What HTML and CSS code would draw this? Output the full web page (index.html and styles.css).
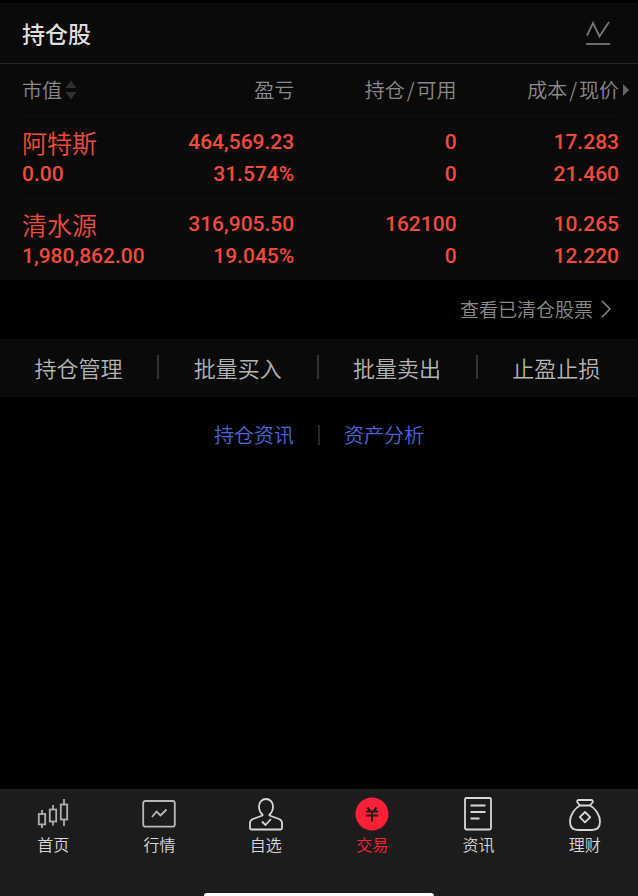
FILE: index.html
```
<!DOCTYPE html>
<html lang="zh-CN">
<head>
  <meta charset="UTF-8" />
  <title>持仓股</title>
  <meta name="viewport" content="width=device-width, initial-scale=1.0" />
  <link rel="stylesheet" href="styles.css">
</head>
<body>
  <main>
    <section class="holdings">
      <header class="holdings-header">
        <h1>持仓股</h1>
        <button class="chart-btn" type="button" aria-label="走势">
          <svg width="24" height="24" viewBox="0 0 24 24" fill="none" stroke="currentColor" stroke-width="1.8">
            <path d="M1 14.5L7 2L13.5 15.5L23 1" />
            <path d="M0 23H24" />
          </svg>
        </button>
      </header>

      <table class="stock-table">
        <thead>
          <tr>
            <th scope="col">
              <button class="sort-btn" type="button">市值
                <svg width="12" height="20" viewBox="0 0 12 20" fill="#303030">
                  <path d="M6 0.5L11.5 8H0.5Z" />
                  <path d="M0.5 12H11.5L6 19.5Z" />
                </svg>
              </button>
            </th>
            <th scope="col">盈亏</th>
            <th scope="col">持仓<span class="slash">/</span>可用</th>
            <th scope="col" class="more-col">成本<span class="slash">/</span>现价</th>
          </tr>
        </thead>
        <tbody>
          <tr>
            <td><span class="name">阿特斯</span><span>0.00</span></td>
            <td><span>464,569.23</span><span>31.574%</span></td>
            <td><span>0</span><span>0</span></td>
            <td><span>17.283</span><span>21.460</span></td>
          </tr>
          <tr>
            <td><span class="name">清水源</span><span>1,980,862.00</span></td>
            <td><span>316,905.50</span><span>19.045%</span></td>
            <td><span>162100</span><span>0</span></td>
            <td><span>10.265</span><span>12.220</span></td>
          </tr>
        </tbody>
      </table>
    </section>

    <div class="cleared-row">
      <a href="#">查看已清仓股票
        <svg width="10" height="18" viewBox="0 0 10 18" fill="none" stroke="currentColor" stroke-width="1.5">
          <path d="M1 1L9 9L1 17" />
        </svg>
      </a>
    </div>

    <div class="actions">
      <button type="button">持仓管理</button>
      <button type="button">批量买入</button>
      <button type="button">批量卖出</button>
      <button type="button">止盈止损</button>
    </div>

    <div class="links">
      <a href="#">持仓资讯</a>
      <a href="#">资产分析</a>
    </div>
  </main>

  <nav class="tab-bar">
    <div class="tabs">
      <a href="#">
        <svg width="36" height="36" viewBox="0 0 36 36" fill="none" stroke="#b0b0b0" stroke-width="1.8">
          <rect x="3.8" y="18" width="6.4" height="10.4" />
          <path d="M7 14V18M7 28.5V32" />
          <rect x="14.8" y="13.5" width="6.4" height="12" />
          <path d="M18 9V13.5M18 25.5V29.5" />
          <rect x="25.8" y="8.5" width="6.4" height="15" />
          <path d="M29 3V8.5M29 23.5V30" />
        </svg>
        <span>首页</span>
      </a>
      <a href="#">
        <svg width="36" height="36" viewBox="0 0 36 36" fill="none" stroke="#b8b8b8" stroke-width="1.8">
          <rect x="2.2" y="5" width="31.6" height="25.6" rx="2" />
          <path d="M11 21L15.5 15.5L19.5 19.5L25.5 13.5" />
        </svg>
        <span>行情</span>
      </a>
      <a href="#">
        <svg width="36" height="36" viewBox="0 0 36 36" fill="none" stroke="#d8d8d8" stroke-width="1.8" stroke-linejoin="round">
          <path d="M14.5 18.5C12 16.5 11 14 11 10.5C11 6 14 3 18 3S25 6 25 10.5C25 14 24 16.5 21.5 18.5V19.5L31 23C33 23.8 34 25 34 27V32C34 33 33.5 33.5 32.5 33.5H3.5C2.5 33.5 2 33 2 32V27C2 25 3 23.8 5 23L14.5 19.5Z" />
          <path d="M14 25.5L17.5 29L23 23" />
        </svg>
        <span>自选</span>
      </a>
      <a href="#" class="active">
        <svg width="36" height="36" viewBox="0 0 36 36">
          <circle cx="18" cy="18" r="16.5" fill="#ff2038" />
          <path d="M13.5 11.5L16 14.5M22.5 11.5L20 14.5M12 15.5H24M12 19.5H24M18 15.5V25.5" fill="none" stroke="#1c1c1c" stroke-width="2" />
        </svg>
        <span>交易</span>
      </a>
      <a href="#">
        <svg width="36" height="36" viewBox="0 0 36 36" fill="none" stroke="#d8d8d8" stroke-width="1.8">
          <rect x="5" y="2" width="26" height="31.5" rx="1.5" />
          <path d="M10.5 9.5H25.5M10.5 16H25.5M10.5 22.5H19.5" />
        </svg>
        <span>资讯</span>
      </a>
      <a href="#">
        <svg width="36" height="36" viewBox="0 0 36 36" fill="none" stroke="#d8d8d8" stroke-width="1.8" stroke-linejoin="round">
          <path d="M13 9.5L10.5 6.5C9.5 5 10.5 4 12 4H24C25.5 4 26.5 5 25.5 6.5L23 9.5" />
          <path d="M13 9.5H23C28 12 33 19 33 25.5C33 31 30 34 25 34H11C6 34 3 31 3 25.5C3 19 8 12 13 9.5Z" />
          <path d="M18 16L23.2 21.2L18 26.4L12.8 21.2Z" />
        </svg>
        <span>理财</span>
      </a>
    </div>
    <div class="home-indicator"></div>
  </nav>
</body>
</html>
```

FILE: styles.css
```
* {
  box-sizing: border-box;
}

body {
  margin: 0;
  min-height: 100vh;
  display: flex;
  flex-direction: column;
  justify-content: space-between;
  background: #000;
  color: #8a8a8a;
  font-family: "Noto Sans CJK SC", sans-serif;
  font-weight: 350;
  font-size: 20px;
}

button {
  padding: 0;
  border: none;
  background: none;
  color: inherit;
  font: inherit;
  cursor: pointer;
}

a {
  color: inherit;
  text-decoration: none;
}

svg {
  display: block;
}

/* holdings */
.holdings {
  margin-top: 3px;
  background: #0a0a0a;
}

.holdings-header {
  display: flex;
  align-items: center;
  justify-content: space-between;
  height: 61px;
  padding: 0 28px 0 22px;
  border-bottom: 1px solid #262626;
}

.holdings-header h1 {
  margin: 0;
  font-size: 23px;
  font-weight: 500;
  color: #dedede;
}

.chart-btn {
  color: #777;
}

.stock-table {
  width: calc(100% - 41px);
  margin: 0 19px 0 22px;
  border-collapse: collapse;
  table-layout: fixed;
  text-align: right;
}

.stock-table th {
  height: 52px;
  padding: 0;
  font-weight: 350;
  line-height: 32px;
  width: 27.2%;
}

.stock-table th:first-child,
.stock-table th:nth-child(2) {
  width: 22.8%;
}

.stock-table th:first-child,
.stock-table td:first-child {
  text-align: left;
}

.stock-table tbody tr {
  border-top: 1px solid #121212;
}

.stock-table td {
  padding: 9px 0 8px;
  color: #f04a3c;
  font-family: Roboto, sans-serif;
  font-size: 21px;
  font-weight: 500;
  line-height: 32px;
}

.stock-table td span {
  display: block;
}

.stock-table .name {
  font-family: "Noto Sans CJK SC", sans-serif;
  font-size: 25px;
  font-weight: 350;
}

.sort-btn {
  display: flex;
  align-items: center;
  gap: 3px;
}

.slash {
  margin: 0 2px;
}

.more-col {
  position: relative;
}

.more-col::after {
  content: "";
  position: absolute;
  top: 20px;
  right: -10px;
  border: 6px solid transparent;
  border-left-color: #666;
  border-right-width: 0;
}

.cleared-row {
  display: flex;
  justify-content: flex-end;
  padding: 15px 27px 16px;
  font-size: 19px;
  line-height: 28px;
}

.cleared-row a {
  display: flex;
  align-items: center;
  gap: 8px;
}

.actions {
  display: flex;
  padding: 16px 3px 18px 0;
  background: #0a0a0a;
  color: #b4b4b4;
  font-size: 22px;
}

.actions button {
  flex: 1;
  line-height: 24px;
}

.actions button + button {
  border-left: 2px solid #333;
}

.links {
  display: flex;
  justify-content: center;
  padding: 28px 0;
  color: #4a66d8;
  line-height: 20px;
}

.links a {
  padding: 0 24px;
}

.links a + a {
  border-left: 2px solid #262626;
}

/* bottom tabs */
.tab-bar {
  display: flex;
  flex-direction: column;
  align-items: center;
  padding-top: 7px;
  background: #1c1c1c;
}

.tabs {
  display: flex;
  width: 100%;
  padding-bottom: 37px;
}

.tabs a {
  flex: 1;
  display: flex;
  flex-direction: column;
  align-items: center;
  color: #d8d8d8;
  font-size: 16px;
  line-height: 24px;
}

.tabs .active {
  color: #ff2038;
}

.home-indicator {
  width: 36%;
  height: 3px;
  border-radius: 3px 3px 0 0;
  background: #fff;
}
```
